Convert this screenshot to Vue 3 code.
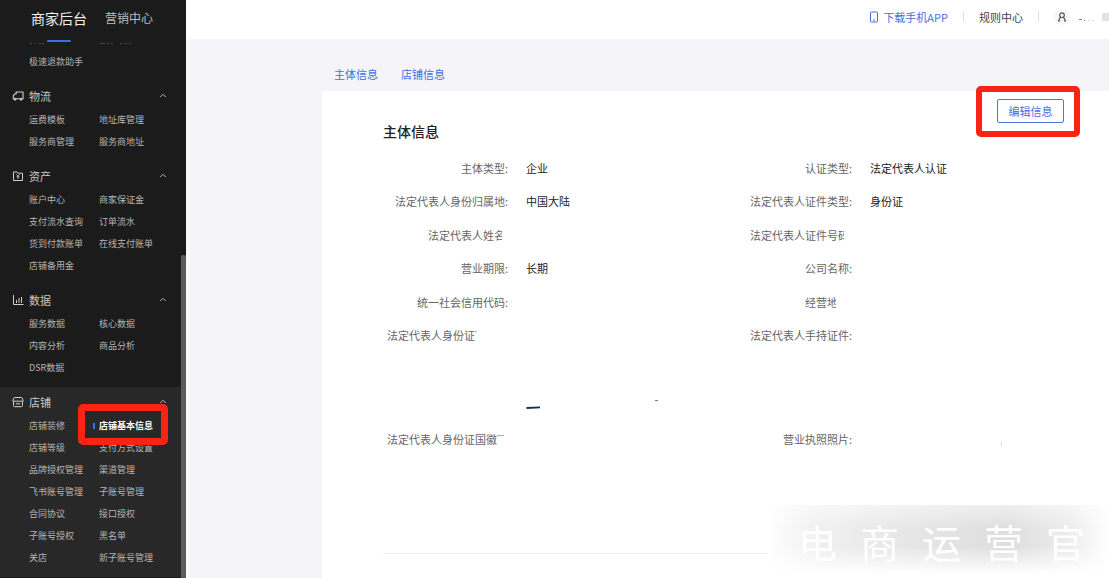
<script setup>
const groups = [
  {
    name: '物流',
    icon: 'truck',
    items: ['运费模板', '地址库管理', '服务商管理', '服务商地址'],
  },
  {
    name: '资产',
    icon: 'wallet',
    items: ['账户中心', '商家保证金', '支付流水查询', '订单流水', '货到付款账单', '在线支付账单', '店铺备用金'],
  },
  {
    name: '数据',
    icon: 'chart',
    items: ['服务数据', '核心数据', '内容分析', '商品分析', 'DSR数据'],
  },
  {
    name: '店铺',
    icon: 'shop',
    open: true,
    items: [
      '店铺装修', '店铺基本信息', '店铺等级', '支付方式设置', '品牌授权管理', '渠道管理', '飞书账号管理',
      '子账号管理', '合同协议', '接口授权', '子账号授权', '黑名单', '关店', '新子账号管理',
    ],
  },
]
const active = '店铺基本信息'

const fields = [
  { label: '主体类型:', value: '企业' },
  { label: '认证类型:', value: '法定代表人认证' },
  { label: '法定代表人身份归属地:', value: '中国大陆' },
  { label: '法定代表人证件类型:', value: '身份证' },
  { label: '法定代表人姓名:', cut: 'cut-name' },
  { label: '法定代表人证件号码:', cut: 'cut-number' },
  { label: '营业期限:', value: '长期' },
  { label: '公司名称:' },
  { label: '统一社会信用代码:' },
  { label: '经营地址:', cut: 'cut-place' },
  { label: '法定代表人身份证', cut: 'cut-front' },
  { label: '法定代表人手持证件:' },
]
const photoFields = [
  { label: '法定代表人身份证国徽', cut: 'cut-back' },
  { label: '营业执照照片:', speck: true },
]
const watermark = ['电', '商', '运', '营', '官']
</script>

<template>
  <div class="page">
    <aside class="sidebar">
      <nav class="switcher">
        <a href="#" class="switch current">商家后台</a>
        <a href="#" class="switch">营销中心</a>
      </nav>
      <div class="scroller">
        <svg class="clipped-row" width="160" height="4" viewBox="0 0 160 4" aria-hidden="true">
          <path d="M30 1.5h2M35 1.5h1M39 1.5h2M42 1.5h2M100 1.5h5M107 1.5h2M111 1.5h2M120 1.5h2M125 1.5h2M129 1.5h2" stroke="#484848" />
        </svg>
        <div class="links first"><a href="#" class="item">极速退款助手</a></div>
        <section v-for="g in groups" :key="g.name" class="group" :class="{ open: g.open }">
          <button type="button" class="group-head">
            <svg class="group-icon" width="12" height="12" viewBox="0 0 12 12" fill="none" stroke="#cfcfcf" aria-hidden="true">
              <template v-if="g.icon === 'truck'">
                <path d="M4 8.7H8M10 8.7H11V2H4.2V3.8H3L1.3 5.8V8.7H2" stroke-width="1.1" />
                <circle cx="3.1" cy="9.2" r="1" fill="#cfcfcf" /><circle cx="9" cy="9.2" r="1" fill="#cfcfcf" />
              </template>
              <template v-else-if="g.icon === 'wallet'">
                <path d="M1.5 10.5V2H5L6 3.2H10.5V10.5Z" />
                <path d="M4.3 4.3L6 6L7.7 4.3M6 6V9M4.5 6.8H7.5" stroke-width=".8" />
              </template>
              <template v-else-if="g.icon === 'chart'">
                <path d="M1.5 1V10.5H11.5M4.5 6V9M7 4V9M9.5 3V9" />
              </template>
              <template v-else>
                <path d="M2.7 1.5H9.3Q10.2 1.5 10.6 3L11.2 5.2H.8L1.4 3Q1.8 1.5 2.7 1.5Z" />
                <path d="M1.5 5.5V9.5Q1.5 10.7 2.7 10.7H9.3Q10.5 10.7 10.5 9.5V5.5M3.8 7.8H8.2" />
              </template>
            </svg>
            <span class="group-name">{{ g.name }}</span>
            <svg width="8" height="8" viewBox="0 0 8 8" fill="none" stroke="#b0b0b0" aria-hidden="true">
              <path d="M1.2 5L4 2.2L6.8 5" />
            </svg>
          </button>
          <div class="links">
            <a v-for="i in g.items" :key="i" href="#" class="item" :class="{ active: i === active }">{{ i }}</a>
          </div>
        </section>
      </div>
      <span class="thumb"></span>
    </aside>

    <div class="main">
      <header class="topbar">
        <a href="#" class="download">
          <svg width="10" height="12" viewBox="0 0 10 12" fill="none" stroke="#3f6fe0" aria-hidden="true">
            <rect x="1.5" y="1" width="7" height="10" rx="1" /><path d="M4 9h2" />
          </svg>
          下载手机APP
        </a>
        <span class="sep"></span>
        <a href="#" class="rules">规则中心</a>
        <span class="sep"></span>
        <span class="avatar">
          <svg width="10" height="10" viewBox="0 0 10 10" fill="none" stroke="#555" stroke-width="1.2" aria-hidden="true">
            <circle cx="5" cy="3.2" r="2.3" /><path d="M3.4 5.2L1.3 9.2M6.6 5.2L8.7 9.2M1 9h2M7 9h2" />
          </svg>
        </span>
        <svg class="user-name" width="17" height="8" viewBox="0 0 17 8" aria-hidden="true">
          <path d="M1 6.5h3M6 7.5h1" stroke="#777" /><path d="M10 7.5h2M14 7.5h2" stroke="#ddd" />
        </svg>
        <span class="block"></span>
      </header>

      <div class="content">
        <nav class="tabs">
          <a href="#">主体信息</a>
          <a href="#">店铺信息</a>
        </nav>
        <main class="card">
          <div class="actions">
            <div class="marked"><button type="button" class="edit">编辑信息</button></div>
          </div>
          <div class="body">
            <h2>主体信息</h2>
            <dl class="fields">
              <div v-for="f in fields" :key="f.label" class="field">
                <dt><span :class="f.cut">{{ f.label }}</span></dt>
                <dd>{{ f.value }}</dd>
              </div>
            </dl>
            <svg class="photos" width="640" height="70" viewBox="0 0 640 70" aria-hidden="true">
              <path d="M143.5 56L157 55.3" stroke="#173349" stroke-width="1.8" />
              <path d="M272 48.5h3" stroke="#777" />
            </svg>
            <dl class="fields photo-fields">
              <div v-for="f in photoFields" :key="f.label" class="field">
                <dt><span :class="f.cut">{{ f.label }}</span></dt>
                <dd>
                  <svg v-if="f.speck" class="speck" width="134" height="14" viewBox="0 0 134 14" aria-hidden="true">
                    <path d="M131.5 9v5" stroke="#e4e4e4" />
                  </svg>
                </dd>
              </div>
            </dl>
            <hr />
          </div>
        </main>
      </div>
    </div>

    <div class="watermark"><span v-for="c in watermark" :key="c">{{ c }}</span></div>
  </div>
</template>

<style>
body {
  background: #f4f4f9;
}
</style>

<style scoped>
.page {
  position: relative;
  display: flex;
  height: 100vh;
  overflow: hidden;
  font: 11px/18px "Noto Sans CJK SC", "Liberation Sans", sans-serif;
  color: #666;
}
.page *,
.page *::before,
.page *::after {
  box-sizing: border-box;
}
a {
  color: inherit;
  text-decoration: none;
}
button {
  font: inherit;
  color: inherit;
  cursor: pointer;
}
.sidebar {
  position: relative;
  flex: none;
  width: 186px;
  background: #1b1b1b;
  color: #b5b5b5;
}
.switcher {
  display: flex;
  align-items: center;
  gap: 18px;
  height: 42px;
  padding: 0 0 6px 31px;
}
.switch {
  position: relative;
  font-size: 12px;
  color: #bdbdbd;
}
.switch.current {
  font-size: 14px;
  color: #f0f0f0;
}
.switch.current::after {
  content: "";
  position: absolute;
  left: 16px;
  bottom: -15px;
  width: 24px;
  height: 2px;
  border-radius: 1px;
  background: #3b6fe8;
}
.clipped-row {
  display: block;
  margin-bottom: 5px;
}
.links {
  display: grid;
  grid-template-columns: 70px 1fr;
  padding-left: 29px;
}
.links.first {
  padding-bottom: 8px;
}
.item {
  position: relative;
  font-size: 9px;
  line-height: 22px;
  white-space: nowrap;
}
.item.active {
  color: #fff;
  font-weight: 700;
}
.item.active::before {
  content: "";
  position: absolute;
  left: -6px;
  top: 8px;
  width: 2px;
  height: 6px;
  background: #3b6fe8;
}
.item.active::after {
  content: "";
  position: absolute;
  z-index: 1;
  left: -21px;
  top: -11px;
  width: 90px;
  height: 41px;
  border: 7px solid #fb2216;
  border-radius: 5px;
}
.group {
  padding: 4px 0 8px;
}
.group.open {
  background: #282828;
}
.group-head {
  display: flex;
  align-items: center;
  width: 100%;
  height: 22px;
  margin-bottom: 2px;
  padding: 0 19px 0 12px;
  border: 0;
  background: none;
  color: #c8c8c8;
}
.group-name {
  flex: 1;
  padding-left: 5px;
  text-align: left;
}
.thumb {
  position: absolute;
  right: 0;
  top: 255px;
  bottom: 0;
  width: 5px;
  border-radius: 2px 2px 0 0;
  background: #5c5c5c;
}
.main {
  flex: 1;
  min-width: 0;
  display: flex;
  flex-direction: column;
}
.topbar {
  display: flex;
  align-items: center;
  justify-content: flex-end;
  height: 39px;
  padding-bottom: 6px;
  background: #fff;
  color: #444;
}
.download {
  display: flex;
  align-items: center;
  gap: 4px;
  color: #3f6fe0;
}
.sep {
  width: 1px;
  height: 11px;
  margin: 0 15px;
  background: #e0e0e0;
}
.avatar {
  display: flex;
  align-items: center;
  justify-content: center;
  width: 16px;
  height: 16px;
  border-radius: 50%;
  background: #f6f6f8;
}
.user-name {
  margin: 0 7px 0 8px;
}
.block {
  width: 7px;
  height: 8px;
  background: #e2e2e2;
}
.content {
  flex: 1;
  display: flex;
  flex-direction: column;
  padding-left: 132px;
  border-left: 4px solid #fafafd;
}
.tabs {
  display: flex;
  gap: 23px;
  padding: 26px 12px 8px;
  color: #3f6fe0;
}
.card {
  flex: 1;
  background: #fff;
}
.actions {
  display: flex;
  justify-content: flex-end;
  padding: 8px 45px 0 0;
}
.marked {
  position: relative;
}
.marked::after {
  content: "";
  position: absolute;
  inset: -13px -16px -14px -21px;
  border: 6px solid #fb2216;
  border-radius: 5px;
  pointer-events: none;
}
.edit {
  display: block;
  width: 67px;
  height: 24px;
  padding: 0;
  border: 1px solid #4a78dd;
  border-radius: 2px;
  background: #fff;
  color: #3f6fe0;
}
.body {
  padding: 0 38px 0 61px;
}
h2 {
  margin: 0 0 12px;
  font-size: 14px;
  line-height: 16px;
  font-weight: 500;
  color: #222;
}
.fields {
  display: grid;
  grid-template-columns: 1fr 1fr;
  grid-auto-rows: 1fr;
  height: 201px;
  margin: 0;
}
.photo-fields {
  height: 34px;
}
.field {
  display: flex;
  align-items: center;
  gap: 18px;
}
dt {
  display: flex;
  justify-content: flex-end;
  width: 125px;
  white-space: nowrap;
}
dt span {
  position: relative;
}
dd {
  margin: 0;
  color: #222;
}
.speck {
  display: block;
}
.cut-name::after,
.cut-number::after,
.cut-place::after {
  content: "";
  position: absolute;
  top: 0;
  right: 0;
  bottom: 0;
  width: 6px;
  background: #fff;
}
.cut-number::after {
  width: 8px;
}
.cut-place::after {
  width: 16px;
}
.cut-front {
  margin-right: 33px;
}
.cut-back {
  margin-right: 11px;
}
.cut-front::after,
.cut-back::after {
  content: "";
  position: absolute;
  top: 5px;
  left: 100%;
  width: 2px;
  height: 1px;
  background: #aaa;
}
.cut-back::after {
  width: 7px;
}
.photos {
  display: block;
}
hr {
  margin: 97px 0 0;
  border: 0;
  border-top: 1px solid #ececec;
}
.watermark {
  position: absolute;
  right: 0;
  bottom: 4px;
  display: flex;
  gap: 23px;
  height: 69px;
  padding: 0 24px 0 30px;
  font-size: 39px;
  line-height: 72px;
  color: #fff;
  background:
    linear-gradient(to bottom, #ffffff80 0%, transparent 35%, transparent 60%, #fff 100%),
    linear-gradient(to right, #fff 0%, #f0f0f0 14%, #e8e8e8 35%, #dedede 70%, #ececec 88%, #fff 100%);
}
</style>
